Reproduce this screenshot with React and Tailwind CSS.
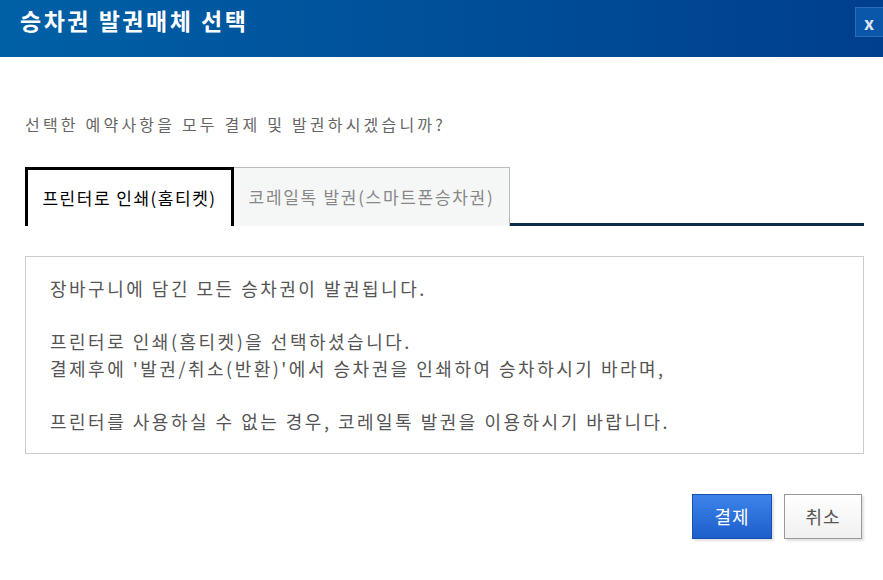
import React from 'react';

const font = { fontFamily: '"Noto Sans CJK KR", "Noto Sans", sans-serif' };

export default function App() {
    return (
        <div className="w-[883px] h-[580px] bg-white overflow-hidden" style={font}>
            <div className="h-[57px] flex justify-between items-start bg-gradient-to-r from-[#0060a6] to-[#003f8c]">
                <h1 className="pl-5 pt-[3px] text-[23px] font-bold text-white tracking-[2.5px]">승차권 발권매체 선택</h1>
                <button className="mt-[7px] -mr-[4px] w-[32px] h-[30px] flex items-center justify-center bg-[#0a56a8] border border-[#2a6dba] text-[#dde6f2] text-[18px] font-bold leading-none pr-[4px]">
                    x
                </button>
            </div>

            <div className="px-[25px]">
                <p className="mt-[55px] text-[16px] text-[#666] tracking-[3.2px]">선택한 예약사항을 모두 결제 및 발권하시겠습니까?</p>

                <div className="mt-[31px] flex items-end w-[839px] border-b-[3px] border-[#0d2c4a]">
                    <div className="w-[209px] h-[59px] -mb-[3px] flex items-center justify-center bg-white border-[3px] border-b-0 border-black text-[17px] text-black tracking-[1.5px]">
                        프린터로 인쇄(홈티켓)
                    </div>
                    <div className="w-[276px] h-[59px] -mb-[3px] flex items-center justify-center bg-[#f5f7f7] border-t border-r border-[#bbb] text-[17px] text-[#888] tracking-[1.7px]">
                        코레일톡 발권(스마트폰승차권)
                    </div>
                </div>

                <div className="mt-[30px] w-[839px] border border-[#ccc] px-6 py-[18px] text-[18px] leading-[26.6px] text-[#555] tracking-[2.5px]">
                    <p>장바구니에 담긴 모든 승차권이 발권됩니다.</p>
                    <p>&nbsp;</p>
                    <p>프린터로 인쇄(홈티켓)을 선택하셨습니다.</p>
                    <p>결제후에 '발권/취소(반환)'에서 승차권을 인쇄하여 승차하시기 바라며,</p>
                    <p>&nbsp;</p>
                    <p>프린터를 사용하실 수 없는 경우, 코레일톡 발권을 이용하시기 바랍니다.</p>
                </div>

                <div className="mt-[40px] flex justify-end gap-3 w-[837px]">
                    <button className="w-[80px] h-[45px] bg-gradient-to-b from-[#3d84ea] to-[#1d5ecb] border border-[#1550b0] text-white text-[18px] tracking-[1px] shadow-[2px_2px_2px_rgba(0,0,0,0.12)]">결제</button>
                    <button className="w-[78px] h-[45px] bg-gradient-to-b from-white to-[#f0f0f0] border border-[#999] text-[#555] text-[18px] tracking-[1px] shadow-[2px_2px_2px_rgba(0,0,0,0.12)]">취소</button>
                </div>
            </div>
        </div>
    );
}
